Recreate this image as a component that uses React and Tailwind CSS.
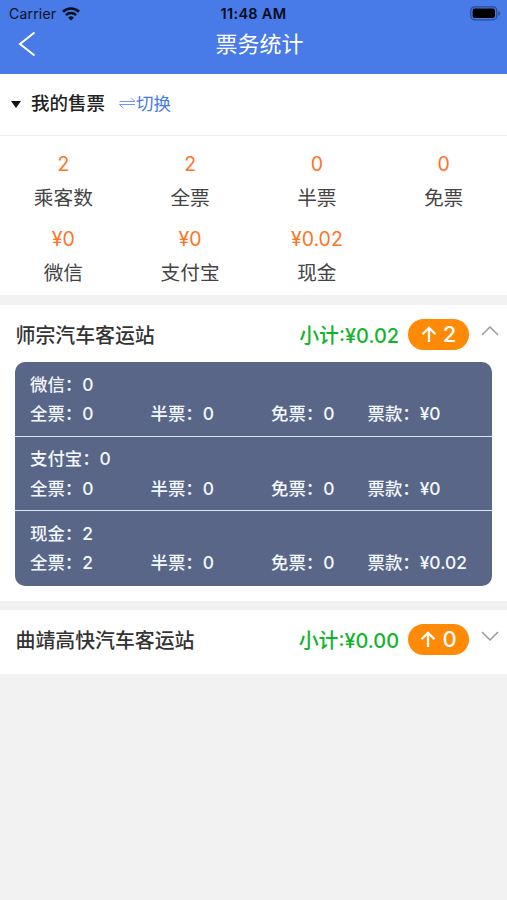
const stats = [
  { label: "乘客数", value: "2" },
  { label: "全票", value: "2" },
  { label: "半票", value: "0" },
  { label: "免票", value: "0" },
  { label: "微信", value: "¥0" },
  { label: "支付宝", value: "¥0" },
  { label: "现金", value: "¥0.02" },
];

const stations = [
  {
    name: "师宗汽车客运站",
    subtotal: "¥0.02",
    count: 2,
    open: true,
    payments: [
      { type: "微信", count: 0, full: 0, half: 0, free: 0, amount: "¥0" },
      { type: "支付宝", count: 0, full: 0, half: 0, free: 0, amount: "¥0" },
      { type: "现金", count: 2, full: 2, half: 0, free: 0, amount: "¥0.02" },
    ],
  },
  {
    name: "曲靖高快汽车客运站",
    subtotal: "¥0.00",
    count: 0,
    open: false,
    payments: [],
  },
];

function WifiIcon() {
  return (
    <svg width="18" height="14" viewBox="0 0 18 14" fill="none" stroke="#0b1020">
      <path d="M1 4.7a11.6 11.6 0 0 1 16 0" strokeWidth="2.7" />
      <path d="M3.9 8.1a7.4 7.4 0 0 1 10.2 0" strokeWidth="2.5" />
      <path d="M9 13.6 6.1 10.7a4.2 4.2 0 0 1 5.8 0z" fill="#0b1020" stroke="none" />
    </svg>
  );
}

function BatteryIcon() {
  return (
    <svg width="31" height="15" viewBox="0 0 31 15" fill="none">
      <rect x="0.8" y="0.8" width="26" height="13" rx="3.8" stroke="#2b498f" strokeWidth="1.2" />
      <rect x="2.6" y="2.6" width="22.4" height="9.4" rx="2.2" fill="#000" />
      <path d="M28.4 5v4.8c1-.4 1.7-1.3 1.7-2.4s-.7-2-1.7-2.4z" fill="#2b498f" />
    </svg>
  );
}

function Header() {
  return (
    <header className="h-[74px] bg-[#487ae8]">
      <div className="grid h-[27px] grid-cols-3 items-center pl-[9px] pr-[6px] text-[14.5px] text-[#0b1020]">
        <div className="flex items-center gap-[6px]">
          <span className="text-[14px] tracking-[0.2px]">Carrier</span>
          <WifiIcon />
        </div>
        <span className="-ml-[3px] text-center font-semibold tracking-[0.3px] text-[#060a18]">11:48 AM</span>
        <div className="flex justify-end">
          <BatteryIcon />
        </div>
      </div>
      <div className="grid h-[34px] grid-cols-[60px_1fr_48px] items-center text-white">
        <svg className="ml-[18px]" width="18" height="26" viewBox="0 0 18 26" fill="none" stroke="white" strokeWidth="2">
          <path d="M16.5 1.5 2 13l14.5 11.5" />
        </svg>
        <h1 className="text-center text-[22px] leading-[32px]">票务统计</h1>
      </div>
    </header>
  );
}

function Filter() {
  return (
    <div className="flex h-[62px] items-center border-b border-[#ececec] bg-white pb-px pl-[11px]">
      <svg width="10" height="7" viewBox="0 0 10 7">
        <path d="M0 0h10L5 7z" fill="#111" />
      </svg>
      <span className="ml-[10px] text-[18.5px] font-medium text-[#222]">我的售票</span>
      <span className="ml-[14px] flex items-center text-[17.5px] text-[#487ae8]">
        <svg className="mb-[2px]" width="17" height="12" viewBox="0 0 17 12" fill="none" stroke="#6f97ee" strokeWidth="1">
          <path d="M0.5 4.5h15.5L12.3 1" />
          <path d="M16 7.5H0.5L4.2 11" />
        </svg>
        切换
      </span>
    </div>
  );
}

function Stats() {
  return (
    <div className="grid h-[159px] grid-cols-4 content-start bg-white pt-[12px]">
      {stats.map((item) => (
        <div key={item.label} className="flex h-[74.5px] flex-col items-center">
          <span className="text-[19.5px] leading-[32px] text-[#fb7427]">{item.value}</span>
          <span className="pt-px text-[19.7px] leading-[34px] text-[#444]">{item.label}</span>
        </div>
      ))}
    </div>
  );
}

function Payment({ payment }) {
  return (
    <div className="h-[74.5px] pl-[15px] pt-[7.5px] leading-[29.5px]">
      <p>
        {payment.type}：{payment.count}
      </p>
      <div className="grid grid-cols-[120.5px_120.5px_96.5px_1fr] whitespace-nowrap">
        <span>全票：{payment.full}</span>
        <span>半票：{payment.half}</span>
        <span>免票：{payment.free}</span>
        <span>票款：{payment.amount}</span>
      </div>
    </div>
  );
}

function Station({ station }) {
  return (
    <section className={station.open ? "h-[296px] bg-white" : "h-[64px] bg-white"}>
      <div className="flex h-[57px] items-center pl-[15.5px] pr-[8px] pt-[2px]">
        <h2 className="flex-1 pt-[5px] text-[19.9px] font-medium text-[#333]">{station.name}</h2>
        <span className="pt-[5px] text-[19.9px] font-medium text-[#12b42b]">小计:{station.subtotal}</span>
        <span className="ml-[9px] flex h-[31px] w-[61px] items-center justify-center gap-[6px] rounded-full bg-[#ff8a05] text-[22px] font-medium text-white">
          <svg width="16" height="17" viewBox="0 0 16 17" fill="none" stroke="white" strokeWidth="2.3">
            <path d="M8 16V1.8M1.5 8.2 8 1.8l6.5 6.4" />
          </svg>
          {station.count}
        </span>
        <svg className="mb-[7px] ml-[12px]" width="18" height="10" viewBox="0 0 18 10" fill="none" stroke="#999" strokeWidth="1.5">
          <path d={station.open ? "M1 9 9 1l8 8" : "M1 1l8 8 8-8"} />
        </svg>
      </div>
      {station.open && (
        <div className="mx-[15px] divide-y-[1.5px] divide-[#dce6f2] overflow-hidden rounded-[10px] bg-[#5a6688] text-[17.4px] font-medium text-[#f2f8ff]">
          {station.payments.map((payment) => (
            <Payment key={payment.type} payment={payment} />
          ))}
        </div>
      )}
    </section>
  );
}

export default function App() {
  return (
    <div className="min-h-screen bg-[#f2f2f2] font-['Inter','Noto_Sans_CJK_SC',sans-serif]">
      <Header />
      <Filter />
      <Stats />
      <div className="flex flex-col gap-[9px] pt-[10px]">
        {stations.map((station) => (
          <Station key={station.name} station={station} />
        ))}
      </div>
    </div>
  );
}
